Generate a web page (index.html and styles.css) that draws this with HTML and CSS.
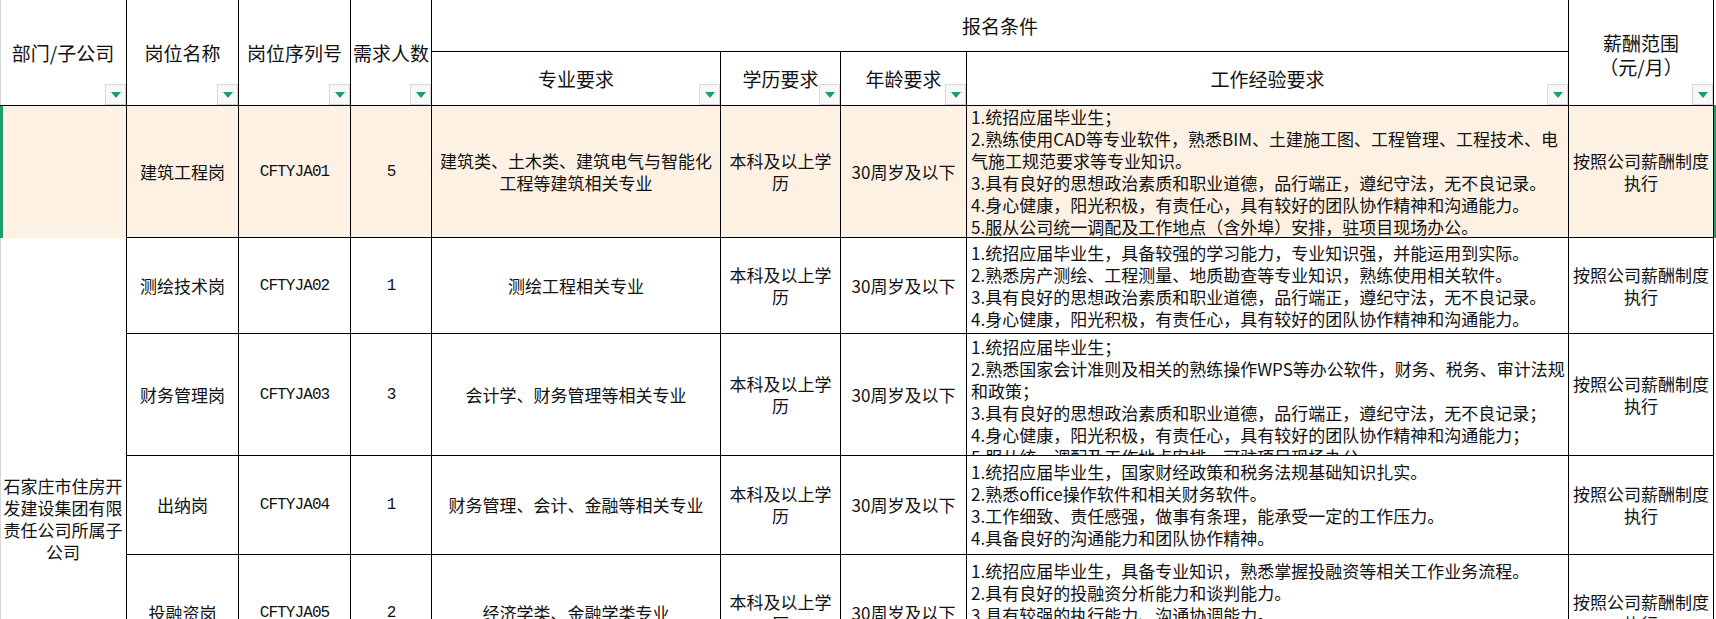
FILE: index.html
```html
<!DOCTYPE html>
<html lang="zh-CN">
<head>
<meta charset="utf-8">
<title>招聘岗位表</title>
<link rel="stylesheet" href="styles.css">
</head>
<body>
<div class="sheet">
  <div class="hd h-dept">部门/子公司<span class="flt"></span></div>
  <div class="hd h-name">岗位名称<span class="flt"></span></div>
  <div class="hd h-code">岗位序列号<span class="flt"></span></div>
  <div class="hd h-num">需求人数<span class="flt"></span></div>
  <div class="hd h-group">报名条件</div>
  <div class="hd h-pay"><p>薪酬范围<br>（元/月）</p><span class="flt"></span></div>
  <div class="hd h-major">专业要求<span class="flt"></span></div>
  <div class="hd h-edu">学历要求<span class="flt"></span></div>
  <div class="hd h-age">年龄要求<span class="flt"></span></div>
  <div class="hd h-exp">工作经验要求<span class="flt"></span></div>

  <div class="cell dept"><p>石家庄市住房开<br>发建设集团有限<br>责任公司所属子<br>公司</p></div>

  <div class="cell hl"><p>建筑工程岗</p></div>
  <div class="cell hl code"><p>CFTYJA01</p></div>
  <div class="cell hl code"><p>5</p></div>
  <div class="cell hl"><p>建筑类、土木类、建筑电气与智能化<br>工程等建筑相关专业</p></div>
  <div class="cell hl"><p>本科及以上学<br>历</p></div>
  <div class="cell hl"><p>30周岁及以下</p></div>
  <div class="cell hl exp"><p>1.统招应届毕业生；<br>2.熟练使用CAD等专业软件，熟悉BIM、土建施工图、工程管理、工程技术、电<br>气施工规范要求等专业知识。<br>3.具有良好的思想政治素质和职业道德，品行端正，遵纪守法，无不良记录。<br>4.身心健康，阳光积极，有责任心，具有较好的团队协作精神和沟通能力。<br>5.服从公司统一调配及工作地点（含外埠）安排，驻项目现场办公。</p></div>
  <div class="cell hl pay sel"><p>按照公司薪酬制度<br>执行</p></div>

  <div class="cell"><p>测绘技术岗</p></div>
  <div class="cell code"><p>CFTYJA02</p></div>
  <div class="cell code"><p>1</p></div>
  <div class="cell"><p>测绘工程相关专业</p></div>
  <div class="cell"><p>本科及以上学<br>历</p></div>
  <div class="cell"><p>30周岁及以下</p></div>
  <div class="cell exp"><p>1.统招应届毕业生，具备较强的学习能力，专业知识强，并能运用到实际。<br>2.熟悉房产测绘、工程测量、地质勘查等专业知识，熟练使用相关软件。<br>3.具有良好的思想政治素质和职业道德，品行端正，遵纪守法，无不良记录。<br>4.身心健康，阳光积极，有责任心，具有较好的团队协作精神和沟通能力。</p></div>
  <div class="cell pay"><p>按照公司薪酬制度<br>执行</p></div>

  <div class="cell"><p>财务管理岗</p></div>
  <div class="cell code"><p>CFTYJA03</p></div>
  <div class="cell code"><p>3</p></div>
  <div class="cell"><p>会计学、财务管理等相关专业</p></div>
  <div class="cell"><p>本科及以上学<br>历</p></div>
  <div class="cell"><p>30周岁及以下</p></div>
  <div class="cell exp top"><p>1.统招应届毕业生；<br>2.熟悉国家会计准则及相关的熟练操作WPS等办公软件，财务、税务、审计法规<br>和政策；<br>3.具有良好的思想政治素质和职业道德，品行端正，遵纪守法，无不良记录；<br>4.身心健康，阳光积极，有责任心，具有较好的团队协作精神和沟通能力；<br>5.服从统一调配及工作地点安排，可驻项目现场办公。</p></div>
  <div class="cell pay"><p>按照公司薪酬制度<br>执行</p></div>

  <div class="cell"><p>出纳岗</p></div>
  <div class="cell code"><p>CFTYJA04</p></div>
  <div class="cell code"><p>1</p></div>
  <div class="cell"><p>财务管理、会计、金融等相关专业</p></div>
  <div class="cell"><p>本科及以上学<br>历</p></div>
  <div class="cell"><p>30周岁及以下</p></div>
  <div class="cell exp"><p>1.统招应届毕业生，国家财经政策和税务法规基础知识扎实。<br>2.熟悉office操作软件和相关财务软件。<br>3.工作细致、责任感强，做事有条理，能承受一定的工作压力。<br>4.具备良好的沟通能力和团队协作精神。</p></div>
  <div class="cell pay"><p>按照公司薪酬制度<br>执行</p></div>

  <div class="cell"><p>投融资岗</p></div>
  <div class="cell code"><p>CFTYJA05</p></div>
  <div class="cell code"><p>2</p></div>
  <div class="cell"><p>经济学类、金融学类专业</p></div>
  <div class="cell"><p>本科及以上学<br>历</p></div>
  <div class="cell"><p>30周岁及以下</p></div>
  <div class="cell exp top5"><p>1.统招应届毕业生，具备专业知识，熟悉掌握投融资等相关工作业务流程。<br>2.具有良好的投融资分析能力和谈判能力。<br>3.具有较强的执行能力、沟通协调能力。</p></div>
  <div class="cell pay"><p>按照公司薪酬制度<br>执行</p></div>
</div>
</body>
</html>
```

FILE: styles.css
```css
* { box-sizing: border-box; }
html, body { margin: 0; padding: 0; background: #fff; }
body {
  width: 1716px;
  height: 619px;
  overflow: hidden;
  font-family: "Noto Sans CJK SC", "Noto Sans", sans-serif;
  color: #111;
}
p { margin: 0; }

.sheet {
  display: grid;
  grid-template-columns: 127px 112px 112px 81px 289px 120px 126px 602px 145px;
  grid-template-rows: 52px 54px 132px 96px 122px 99px 116px;
}

/* header */
.hd {
  position: relative;
  display: flex;
  align-items: center;
  justify-content: center;
  text-align: center;
  border-right: 1px solid #000;
  border-bottom: 1px solid #000;
  font-size: 19px;
  line-height: 24px;
  background: #fff;
  white-space: nowrap;
}
.h-dept  { grid-column: 1; grid-row: 1 / 3; box-shadow: inset 1px 0 0 #d6d6d6; }
.h-name  { grid-column: 2; grid-row: 1 / 3; }
.h-code  { grid-column: 3; grid-row: 1 / 3; }
.h-num   { grid-column: 4; grid-row: 1 / 3; }
.h-group { grid-column: 5 / 9; grid-row: 1; }
.h-pay   { grid-column: 9; grid-row: 1 / 3; padding-top: 4px; }
.h-major { grid-column: 5; grid-row: 2; }
.h-edu   { grid-column: 6; grid-row: 2; }
.h-age   { grid-column: 7; grid-row: 2; }
.h-exp   { grid-column: 8; grid-row: 2; }

.flt {
  position: absolute;
  right: 0;
  bottom: 0;
  width: 21px;
  height: 21px;
  border: 1px solid #d8d8d8;
  background: #f8f8f8;
}
.flt::after {
  content: "";
  position: absolute;
  left: 50%;
  top: 50%;
  margin-left: -5px;
  margin-top: -3px;
  border-left: 5px solid transparent;
  border-right: 5px solid transparent;
  border-top: 6px solid #1e9b6b;
}

/* body cells */
.cell {
  display: flex;
  align-items: center;
  justify-content: center;
  text-align: center;
  border-right: 1px solid #000;
  border-bottom: 1px solid #000;
  font-size: 17px;
  line-height: 22px;
  padding: 0 3px;
  white-space: nowrap;
  overflow: hidden;
}
.hl { background: #fdf1e3; }

.dept {
  position: relative;
  grid-column: 1;
  grid-row: 3 / span 5;
  align-items: flex-start;
  padding-top: 369px;
  border-bottom: none;
  overflow: visible;
  background: linear-gradient(to bottom, #fdf1e3 0, #fdf1e3 132px, #fff 132px);
  box-shadow: inset 1px 0 0 #d6d6d6;
}
.dept::before {
  content: "";
  position: absolute;
  left: 0;
  top: 0;
  width: 3px;
  height: 132px;
  background: #1f9d6a;
}

.code {
  font-family: "Liberation Mono", "DejaVu Sans Mono", monospace;
  font-size: 16px;
  letter-spacing: -0.9px;
}

.exp {
  justify-content: flex-start;
  text-align: left;
  padding: 0 0 0 4px;
}
.top { align-items: flex-start; padding-top: 2px; }
.top5 { align-items: flex-start; padding-top: 5px; }

.pay { position: relative; overflow: visible; }
.sel::after {
  content: "";
  position: absolute;
  right: -3px;
  top: -1px;
  bottom: -1px;
  width: 2px;
  background: #1f9d6a;
}
```
